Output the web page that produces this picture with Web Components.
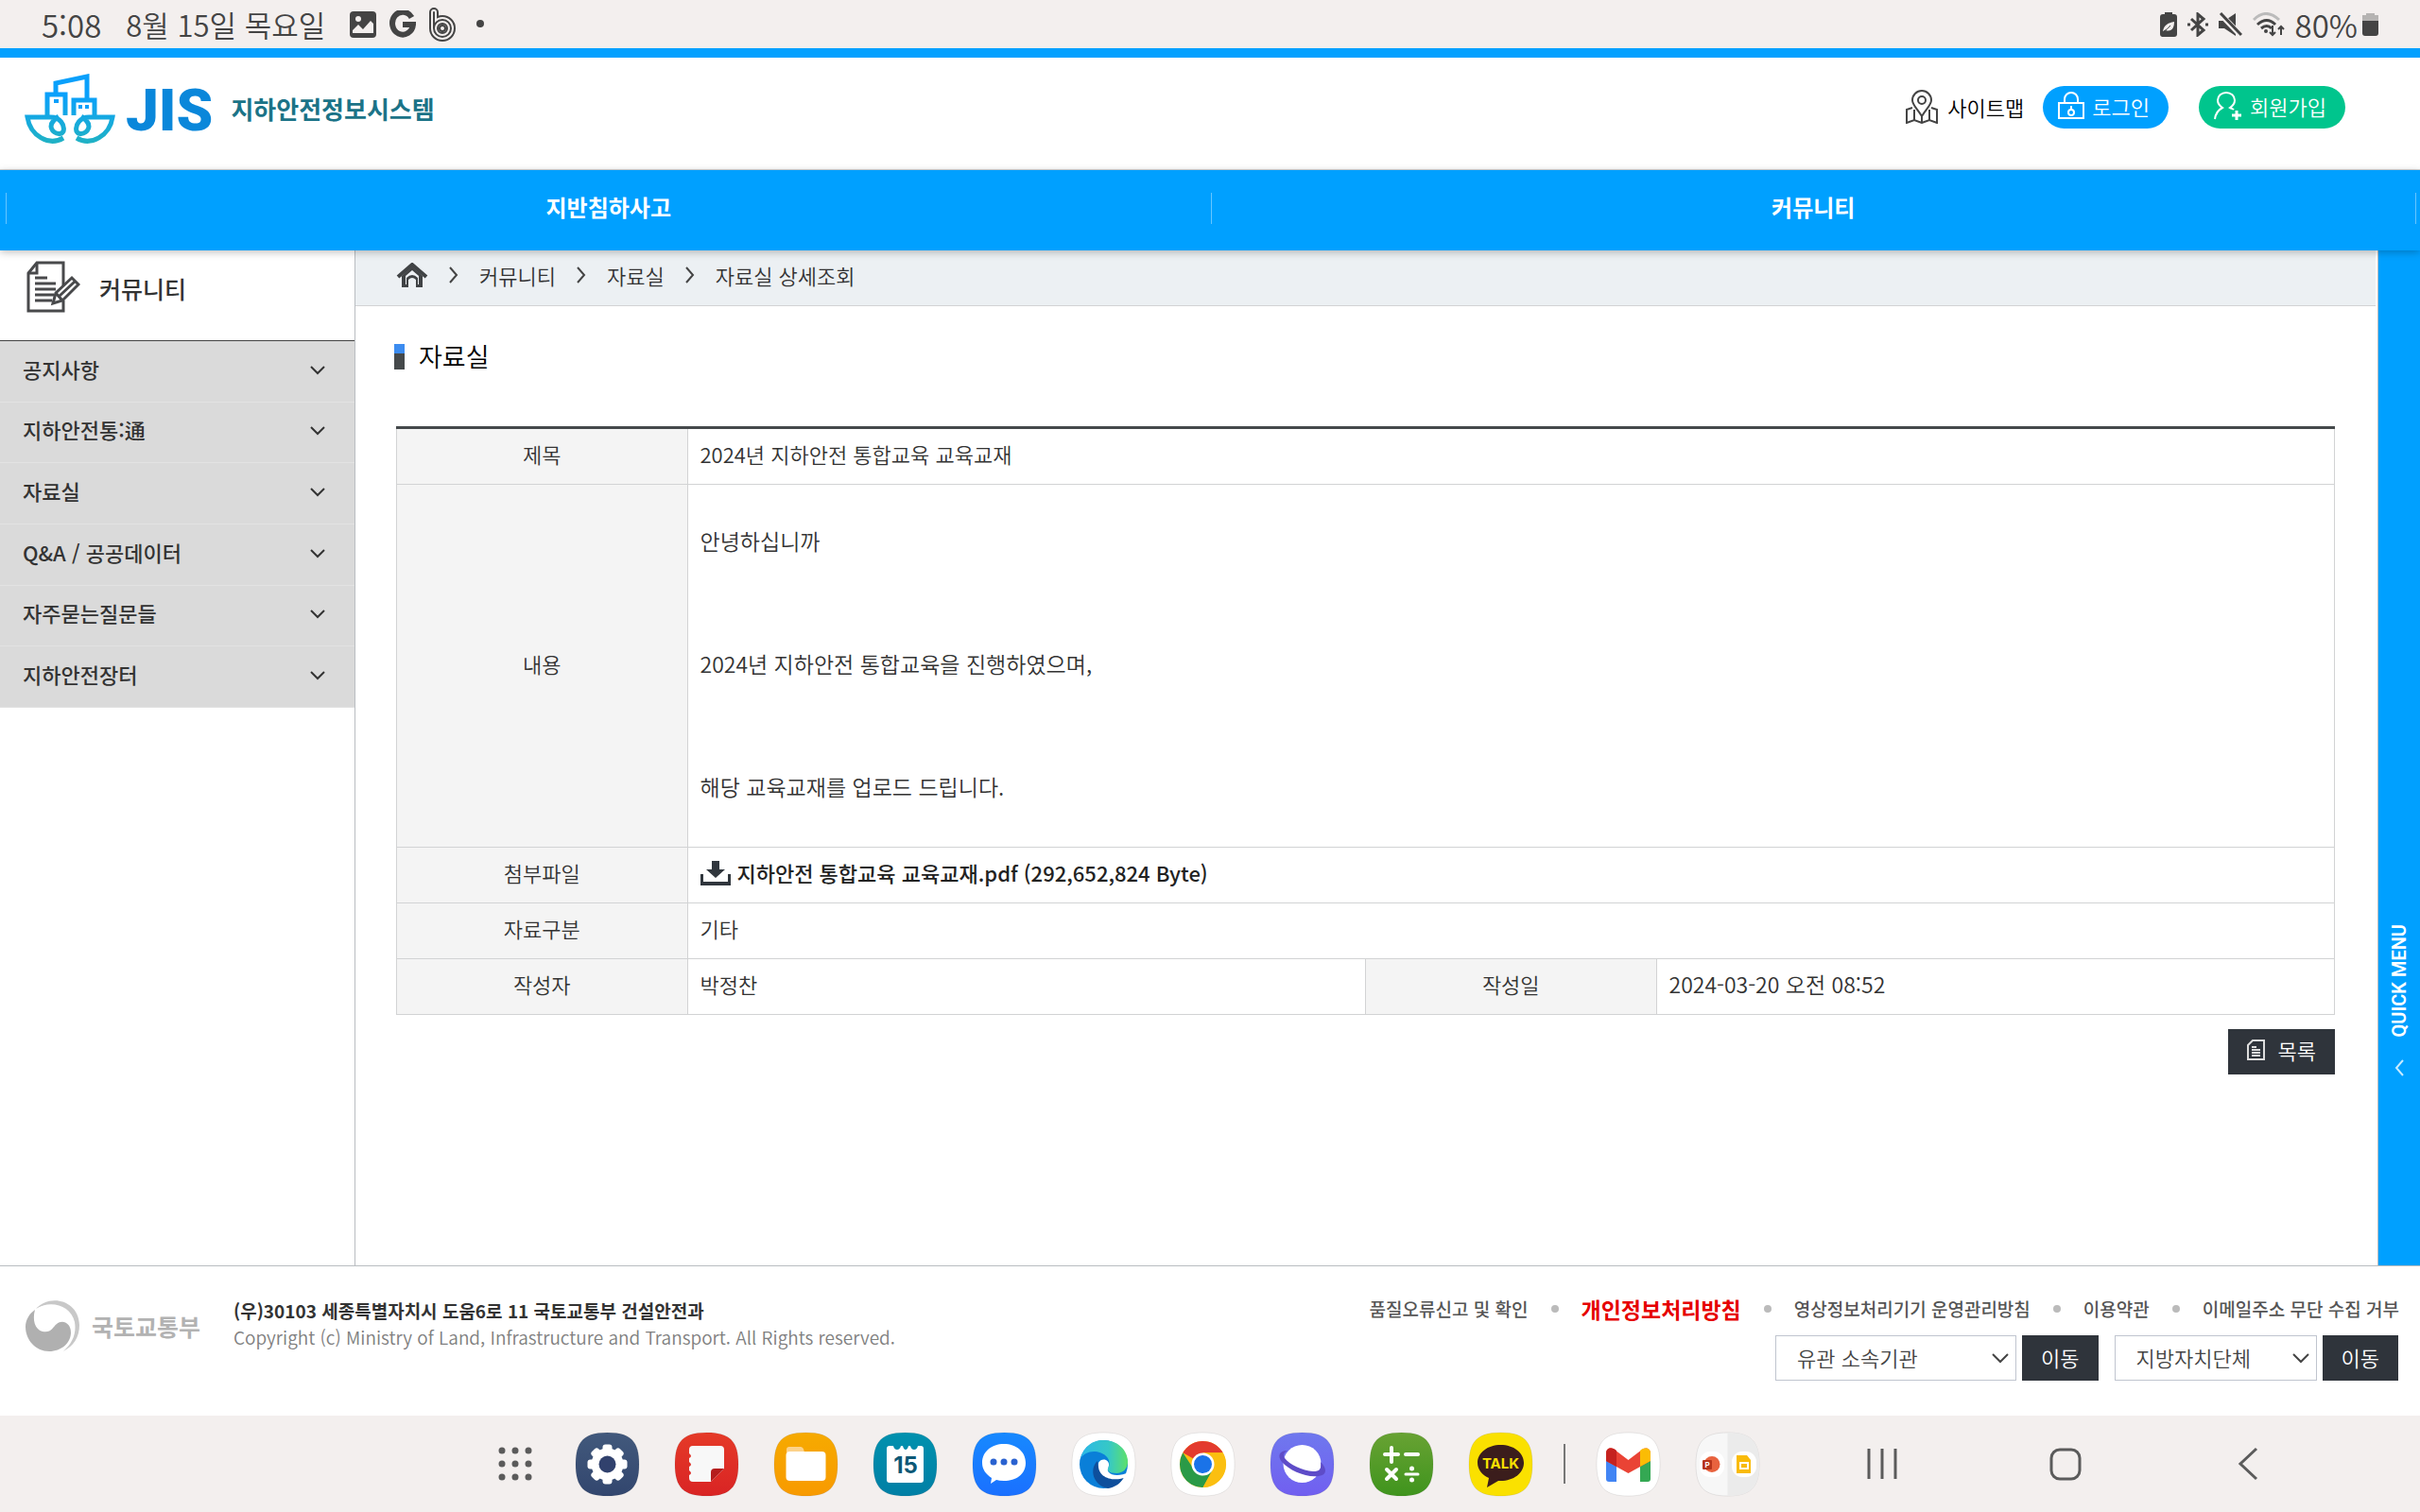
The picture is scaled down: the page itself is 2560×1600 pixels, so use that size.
<!DOCTYPE html>
<html lang="ko">
<head>
<meta charset="utf-8">
<title>지하안전정보시스템</title>
<style>
/* Variables & Colors */
:root {
  --blue: #00a0ff;
  --green: #00c58d;
  --dark: #2f343b;
  --text: #333333;
  --line: #d2d3d4;
  --frame: #b9bdc1;
  --system: #f3efee;
}

/* Document Selector */
body {
  margin: 0;
  min-height: 100vh;
  display: flex;
  flex-direction: column;
  background: #fff;
  color: var(--text);
  font-family: "Noto Sans CJK KR", "Noto Sans", sans-serif;
  font-size: 22px;
  font-weight: 350;
  line-height: 32px;
}
main {
  flex: 1;
  display: grid;
  grid-template-columns: 375px 1fr 44px;
}
.content {
  border-left: 1px solid var(--frame);
  border-right: 1px solid var(--frame);
}
</style>
</head>
<body>
<status-bar></status-bar>
<site-header>
  <pill-link slot="login" href="#login">
    <svg slot="icon" width="28" height="30" viewBox="0 0 28 30" fill="none" stroke="#fff" stroke-width="2"><path d="M1 12h26v16H1zM7 12V8a7 7 0 0 1 14 0v4"/><path d="M14 15v5"/><circle cx="14" cy="22" r="3"/></svg>
    로그인
  </pill-link>
  <pill-link slot="join" href="#join" class="join">
    <svg slot="icon" width="30" height="30" viewBox="0 0 30 30" fill="none" stroke="#fff" stroke-width="2"><path d="M1 29c1-7 4-10 8-12-3-2-5-5-5-8a9 8 0 0 1 18 0c0 3-2 6-5 8 2 1 3 1 4 2"/><path d="M24 20v10M19 25h10" stroke-width="3"/></svg>
    회원가입
  </pill-link>
</site-header>
<main-nav>
  <a href="#accident">지반침하사고</a>
  <a href="#community">커뮤니티</a>
</main-nav>
<main>
  <side-menu>
    <span slot="title">커뮤니티</span>
    <menu-item>공지사항</menu-item>
    <menu-item>지하안전통:通</menu-item>
    <menu-item>자료실</menu-item>
    <menu-item>Q&amp;A / 공공데이터</menu-item>
    <menu-item>자주묻는질문들</menu-item>
    <menu-item>지하안전장터</menu-item>
  </side-menu>
  <div class="content">
    <bread-crumb></bread-crumb>
    <post-detail><span slot="title">자료실</span></post-detail>
  </div>
  <quick-menu>QUICK MENU</quick-menu>
</main>
<site-footer></site-footer>
<task-bar></task-bar>

<script>
function define(name, html) {
  const template = document.createElement('template')
  template.innerHTML = html
  window.customElements.define(name, class extends HTMLElement {
    constructor() {
      super()
      this.attachShadow({ mode: 'open' })
      this.shadowRoot.appendChild(template.content.cloneNode(true))
    }
  })
}

define('status-bar', `<style>
:host {
  display: flex;
  align-items: center;
  justify-content: space-between;
  height: 51px;
  padding: 0 44px;
  background: var(--system);
  color: #444;
  font-size: 31px;
}
div {
  display: flex;
  align-items: center;
}
.left { gap: 14px; }
.time {
  margin-right: 12px;
  font-size: 33px;
}
.date { margin-right: 12px; }
.right { gap: 11px; }
.battery {
  display: flex;
  align-items: center;
  gap: 5px;
  font-size: 33px;
}
svg { display: block; }
</style>
<div class="left">
  <span class="time">5:08</span>
  <span class="date">8월 15일 목요일</span>
  <svg width="28" height="28" viewBox="0 0 28 28"><rect width="28" height="28" rx="4" fill="#444"/><circle cx="9" cy="8" r="3" fill="#f3efee"/><path d="M3 23v-3l6-6 5 5 8-9 3 3v10z" fill="#f3efee"/></svg>
  <svg width="28" height="30" viewBox="0 0 28 30" fill="none" stroke="#444" stroke-width="6"><path d="M23.500 7.500A11 12 0 1 0 25 15H14"/></svg>
  <svg width="28" height="36" viewBox="0 0 28 36" fill="none" stroke-linecap="round"><path d="M5 5v17a9 9 0 1 0 9-9 9 9 0 0 0-9 9" stroke="#444" stroke-width="10"/><path d="M5 5v17a9 9 0 1 0 9-9 9 9 0 0 0-9 9" stroke="#f3efee" stroke-width="6"/><path d="M5 5v17a9 9 0 1 0 9-9 9 9 0 0 0-9 9" stroke="#444" stroke-width="2"/><circle cx="14" cy="22" r="3" stroke="#444" stroke-width="2"/></svg>
  <svg width="24" height="20" viewBox="0 0 24 20"><circle cx="12" cy="9" r="4" fill="#444"/></svg>
</div>
<div class="right">
  <svg width="18" height="26" viewBox="0 0 18 26"><path d="M5 0h8v2h2q3 0 3 3v18q0 3-3 3H3q-3 0-3-3V5q0-3 3-3h2z" fill="#444"/><path d="M3 20c1-6 5-9 12-10 0 7-3 11-9 9" fill="#f3efee"/><path d="M4 20q4-2 7-6" stroke="#444" fill="none"/></svg>
  <svg width="22" height="26" viewBox="0 0 22 26" fill="none" stroke="#444" stroke-width="3"><path d="M4 7l13 12-6 5V2l6 5L4 19"/><path d="M0 13h3M19 13h3"/></svg>
  <svg width="25" height="26" viewBox="0 0 25 26"><path d="M0 9h6L18 1v24L6 17H0z" fill="#444"/><path d="M0 0l25 26" stroke="#f3efee" stroke-width="6"/><path d="M2 1l22 23" stroke="#444" stroke-width="3"/></svg>
  <svg width="34" height="26" viewBox="0 0 34 26" fill="none" stroke-width="3"><path d="M1 8q13-13 27 0" stroke="#bbb"/><path d="M5 13q10-9 19 0M9 17q6-5 11 0" stroke="#444"/><circle cx="14" cy="20" r="2" fill="#444"/><path d="M21 14v10M18 21l3 3 3-3M30 24V15M27 18l3-3 3 3" stroke="#444" stroke-width="2"/></svg>
  <span class="battery">80%
    <svg width="17" height="24" viewBox="0 0 17 24"><path d="M4 0h9v2h4v8H0V2h4z" fill="#b5b3b2"/><path d="M0 8h17v13q0 3-3 3H3q-3 0-3-3z" fill="#444"/></svg>
  </span>
</div>`)

define('pill-link', `<style>
:host {
  display: block;
  --pill: var(--blue);
}
:host(.join) { --pill: var(--green); }
a {
  display: flex;
  align-items: center;
  gap: 8px;
  padding: 5px 20px 8px 16px;
  border-radius: 23px;
  background: var(--pill);
  color: #fff;
  text-decoration: none;
}
</style>
<a href="#"><slot name="icon"></slot><span><slot></slot></span></a>`)

define('site-header', `<style>
:host {
  display: flex;
  align-items: center;
  justify-content: space-between;
  padding: 17px 79px 27px 26px;
  border-top: 10px solid var(--blue);
  border-bottom: 1px solid var(--line);
}
.logo, .tools, .sitemap {
  display: flex;
  align-items: center;
}
.logo {
  color: #1b7387;
  text-decoration: none;
}
.jis {
  margin: 4px 19px 0 11px;
  color: #0a87da;
  font: 900 62px/70px Roboto, sans-serif;
}
.name {
  font-size: 26px;
  font-weight: 700;
}
.tools { margin-bottom: 4px; }
.sitemap {
  gap: 10px;
  margin-right: 20px;
  color: #000;
  text-decoration: none;
}
.tools ::slotted(.join) { margin-left: 32px; }
</style>
<a class="logo" href="#">
  <svg width="96" height="74" viewBox="0 0 96 74" fill="none" stroke="url(#g)" stroke-width="5">
    <defs><linearGradient id="g" gradientUnits="userSpaceOnUse" x1="0" y1="0" x2="0" y2="74"><stop offset=".3" stop-color="#0aa0fb"/><stop offset="1" stop-color="#20b2c4"/></linearGradient></defs>
    <path d="M24 46V22h19v22M33 22V10l33-7v24M52 44V28h22v18"/>
    <path d="M31 27h5v4h-5zM57 33h4v4h-4zM64 33h4v4h-4z" fill="#0aa0fb" stroke="none"/>
    <path d="M41 68C26 77 6 66 3 46h25c9 0 15 8 13 15-3 5-12 2-13-5 0-5 4-8 8-11"/>
    <path d="M55 68c15 9 35-2 38-22H68c-9 0-15 8-13 15 3 5 12 2 13-5 0-5-4-8-8-11"/>
  </svg>
  <span class="jis">JIS</span>
  <span class="name">지하안전정보시스템</span>
</a>
<div class="tools">
  <a class="sitemap" href="#sitemap">
    <svg width="34" height="36" viewBox="0 0 34 36" fill="none" stroke="#444" stroke-width="2"><path d="M17 28C12 20 7 16 7 11a10 10 0 0 1 20 0c0 5-5 9-10 17z"/><circle cx="17" cy="11" r="4"/><path d="M7 19l-6 2v14l8-3 8 3 8-3 8 3V21l-6-2M9 21v11M17 28v7M25 21v11"/></svg>
    사이트맵
  </a>
  <slot name="login"></slot>
  <slot name="join"></slot>
</div>`)

define('main-nav', `<style>
:host {
  display: block;
  position: relative;
  z-index: 1;
  padding: 24px 4px 28px 6px;
  background: var(--blue);
  box-shadow: 0 2px 8px rgba(0, 0, 0, .25);
}
nav {
  display: grid;
  grid-template-columns: 1fr 1fr;
  border-right: 1px solid #66c6ff;
}
::slotted(a) {
  padding-bottom: 4px;
  border-left: 1px solid #66c6ff;
  color: #fff;
  font-size: 24px;
  font-weight: 700;
  line-height: 29px;
  text-align: center;
  text-decoration: none;
}
</style>
<nav><slot></slot></nav>`)

define('menu-item', `<style>
:host { display: grid; }
button {
  display: flex;
  align-items: center;
  justify-content: space-between;
  padding: 0 31px 2px 24px;
  border: 0;
  border-bottom: 1px solid #e2e2e2;
  background: #dadada;
  color: #333;
  font: inherit;
  font-weight: 500;
}
span { padding-bottom: 4px; }
</style>
<button type="button"><span><slot></slot></span><svg width="16" height="10" viewBox="0 0 16 10" fill="none" stroke="#333" stroke-width="2"><path d="M1 1l7 7 7-7"/></svg></button>`)

define('side-menu', `<style>
:host { display: block; }
h2 {
  display: flex;
  align-items: center;
  gap: 20px;
  margin: 0;
  padding: 11px 28px 29px;
  border-bottom: 1px solid #444;
  font-size: 25px;
  font-weight: 500;
}
h2 ::slotted(span) { padding-top: 3px; }
nav {
  display: grid;
  grid-auto-rows: 1fr;
  height: 388px;
}
</style>
<h2>
  <svg width="57" height="55" viewBox="0 0 57 55" fill="none" stroke="#48494b" stroke-width="3"><path d="M39 26V2H11L2 13v40h37V42"/><path d="M2 13h9V2M9 18h13M9 24h22M9 30h22M9 36h20M9 42h18"/><path d="M28 45l3-11 17-16 7 7-17 17z" fill="#fff"/><path d="M31 34l7 8M34 38l17-16"/></svg>
  <slot name="title"></slot>
</h2>
<nav><slot></slot></nav>`)

define('bread-crumb', `<style>
:host {
  display: block;
  margin-right: 2px;
  padding: 10px 43px 16px;
  border-bottom: 1px solid var(--line);
  background: #ecf0f3;
}
nav {
  display: flex;
  align-items: center;
  gap: 22px;
}
a {
  color: #333;
  text-decoration: none;
}
svg { display: block; }
</style>
<nav>
  <a href="#"><svg width="34" height="26" viewBox="0 0 34 26"><path d="M2 15L17 2l15 13" fill="none" stroke="#404345" stroke-width="4"/><path d="M6 14L17 4l11 10v12h-7v-8q-4-4-8 0v8H6z" fill="#404345"/><path d="M10 14l7-6 7 6v9h-1v-7q-6-6-12 0v7h-1z" fill="#ecf0f3"/></svg></a>
  <svg width="10" height="18" viewBox="0 0 10 18" fill="none" stroke="#444" stroke-width="2"><path d="M1 1l7 8-7 8"/></svg>
  <a href="#community">커뮤니티</a>
  <svg width="10" height="18" viewBox="0 0 10 18" fill="none" stroke="#444" stroke-width="2"><path d="M1 1l7 8-7 8"/></svg>
  <a href="#data">자료실</a>
  <svg width="10" height="18" viewBox="0 0 10 18" fill="none" stroke="#444" stroke-width="2"><path d="M1 1l7 8-7 8"/></svg>
  <a href="#detail">자료실 상세조회</a>
</nav>`)

define('post-detail', `<style>
:host {
  display: block;
  padding: 34px 45px 0 43px;
}
h1 {
  display: flex;
  align-items: center;
  gap: 15px;
  margin: 0 0 55px -2px;
  color: #000;
  font-size: 27px;
  font-weight: inherit;
  line-height: 38px;
}
h1::before {
  content: "";
  width: 11px;
  height: 27px;
  background: linear-gradient(#3c8cf0 10px, #45494b 10px);
}
table {
  width: 100%;
  border-collapse: collapse;
  table-layout: fixed;
}
th, td {
  padding: 10px 13px 15px;
  border: 1px solid var(--line);
  line-height: 33px;
}
tr:first-child > * { border-top: 3px solid #45494b; }
th {
  background: #f4f4f4;
  font-weight: inherit;
}
.body, .date { font-size: 23px; }
.body {
  padding: 43px 13px 47px;
}
p {
  margin: 0 0 97px;
}
p:last-child { margin: 0; }
.file {
  display: flex;
  align-items: center;
  gap: 7px;
  color: #222;
  font-weight: 500;
  text-decoration: none;
}
.actions {
  display: flex;
  justify-content: flex-end;
  margin-top: 15px;
}
button {
  display: flex;
  align-items: center;
  gap: 14px;
  padding: 6px 20px 10px;
  border: 0;
  background: var(--dark);
  color: #fff;
  font: inherit;
}
</style>
<h1><slot name="title"></slot></h1>
<table>
  <colgroup><col style="width:15%"><col style="width:35%"><col style="width:15%"><col style="width:35%"></colgroup>
  <tbody>
    <tr><th scope="row">제목</th><td colspan="3">2024년 지하안전 통합교육 교육교재</td></tr>
    <tr><th scope="row">내용</th><td colspan="3" class="body">
      <p>안녕하십니까</p>
      <p>2024년 지하안전 통합교육을 진행하였으며,</p>
      <p>해당 교육교재를 업로드 드립니다.</p>
    </td></tr>
    <tr><th scope="row">첨부파일</th><td colspan="3"><a class="file" href="#file">
      <svg width="32" height="26" viewBox="0 0 32 26" fill="#30363d"><path d="M12 0h8v9h6L16 18 6 9h6zM0 14h3v8h26v-8h3v12H0z"/></svg>
      지하안전 통합교육 교육교재.pdf (292,652,824 Byte)</a></td></tr>
    <tr><th scope="row">자료구분</th><td colspan="3">기타</td></tr>
    <tr><th scope="row">작성자</th><td>박정찬</td><th scope="row">작성일</th><td class="date">2024-03-20 오전 08:52</td></tr>
  </tbody>
</table>
<div class="actions">
  <button type="button"><svg width="19" height="22" viewBox="0 0 19 22" fill="none" stroke="#ddd" stroke-width="2"><path d="M6 1h12v20H1V6zM5 8h5M5 11h9M5 14h9M5 17h9"/></svg>목록</button>
</div>`)

define('quick-menu', `<style>
:host {
  display: flex;
  align-items: flex-end;
  background: var(--blue);
}
button {
  display: flex;
  flex-direction: column;
  align-items: center;
  gap: 24px;
  width: 100%;
  padding: 0 0 200px;
  border: 0;
  background: none;
  color: #fff;
  font: 600 20px/24px Roboto, sans-serif;
}
span {
  writing-mode: vertical-rl;
  transform: rotate(180deg);
}
</style>
<button type="button"><span><slot></slot></span><svg width="10" height="18" viewBox="0 0 10 18" fill="none" stroke="#c8ebff" stroke-width="2"><path d="M9 1L2 9l7 8"/></svg></button>`)

define('link-select', `<style>
:host {
  display: flex;
  gap: 6px;
}
label {
  display: grid;
  align-items: center;
  width: var(--select-width);
}
select, svg { grid-area: 1 / 1; }
select {
  appearance: none;
  width: 100%;
  height: 48px;
  padding: 0 24px 2px 22px;
  border: 1px solid #c0c5cf;
  border-radius: 0;
  background: #fff;
  color: #444;
  font: inherit;
}
svg {
  justify-self: end;
  margin-right: 8px;
  pointer-events: none;
}
button {
  padding: 0 20px 2px;
  border: 0;
  background: var(--dark);
  color: #fff;
  font: inherit;
}
</style>
<label>
  <select><option></option></select>
  <svg width="18" height="11" viewBox="0 0 18 11" fill="none" stroke="#444" stroke-width="2"><path d="M1 1l8 8 8-8"/></svg>
</label>
<button type="button">이동</button>`)

define('site-footer', `<style>
:host {
  display: flex;
  justify-content: space-between;
  min-height: 96px;
  padding: 31px 22px;
  border-top: 1px solid var(--frame);
}
.about, .owner, .links, .selects, li {
  display: flex;
  align-items: center;
}
.about {
  align-items: flex-start;
  gap: 35px;
}
.owner {
  gap: 12px;
  padding: 4px 0 0 5px;
  color: #b2b2b2;
  font-size: 25px;
  font-weight: 700;
}
.contact { padding-top: 2px; }
address {
  font-size: 19px;
  font-style: normal;
  font-weight: 700;
  line-height: 28px;
}
p {
  margin: 0;
  color: #808080;
  font-size: 19px;
  line-height: 28px;
}
.links {
  justify-content: flex-end;
  margin: -2px 0 12px;
  padding: 0;
  list-style: none;
  font-size: 19px;
}
li + li::before {
  content: "";
  width: 8px;
  height: 8px;
  margin: 0 24px;
  border-radius: 50%;
  background: #bbb;
}
a {
  color: #555;
  font-weight: 500;
  text-decoration: none;
}
.privacy {
  color: #e60000;
  font-size: 23px;
  font-weight: 700;
}
.selects {
  justify-content: flex-end;
  gap: 17px;
  padding-right: 1px;
}
.org { --select-width: 255px; }
.local { --select-width: 214px; }
</style>
<div class="about">
  <div class="owner">
    <svg width="58" height="56" viewBox="0 0 58 56"><path d="M11 10C25-6 56 0 57 27c0 13-6 22-17 28 10-9 14-19 12-31C48 6 26 0 11 10z" fill="#c8c8c8"/><path d="M10 12C20 2 41 4 47 23c-4-3-12-2-15 4-3 7-8 11-14 8C10 31 8 22 10 12z" fill="#fff"/><path d="M10 11C7 22 10 32 18 34c9 2 11-5 15-8 6-5 15-1 15 9 0 11-10 20-23 20C11 55 0 43 0 29 0 22 4 15 10 11z" fill="#b0b0b0"/></svg>
    국토교통부
  </div>
  <div class="contact">
    <address>(우)30103 세종특별자치시 도움6로 11 국토교통부 건설안전과</address>
    <p>Copyright (c) Ministry of Land, Infrastructure and Transport. All Rights reserved.</p>
  </div>
</div>
<div>
  <ul class="links">
    <li><a href="#report">품질오류신고 및 확인</a></li>
    <li><a class="privacy" href="#privacy">개인정보처리방침</a></li>
    <li><a href="#cctv">영상정보처리기기 운영관리방침</a></li>
    <li><a href="#terms">이용약관</a></li>
    <li><a href="#email">이메일주소 무단 수집 거부</a></li>
  </ul>
  <div class="selects">
    <link-select class="org" label="유관 소속기관"></link-select>
    <link-select class="local" label="지방자치단체"></link-select>
  </div>
</div>`)

const footer = document.querySelector('site-footer').shadowRoot
footer.querySelectorAll('link-select').forEach((el) => {
  const text = el.getAttribute('label')
  const select = el.shadowRoot.querySelector('select')
  select.options[0].textContent = text
  select.setAttribute('aria-label', text)
})

document.querySelectorAll('pill-link').forEach((el) => {
  el.shadowRoot.querySelector('a').href = el.getAttribute('href')
})

define('app-icon', `<style>
:host {
  display: block;
  width: 67px;
  height: 67px;
}
button {
  display: block;
  padding: 0;
  border: 0;
  background: none;
}
svg {
  display: block;
  overflow: visible;
}
text { font: 700 24px Inter, sans-serif; }
</style>
<button type="button"></button>`)

// every launcher icon sits on the same rounded tile
const tile = 'M33.500 0C58 0 67 9 67 33.500S58 67 33.500 67 0 58 0 33.500 9 0 33.500 0z'
const apps = {
  settings: ['#42597c', '#32466e', `<g transform="translate(33.500 33.500)" fill="#fff"><circle r="17"/>${[0, 45, 90, 135].map((a) => `<rect x="-5" y="-21" width="10" height="42" rx="3" transform="rotate(${a})"/>`).join('')}<circle r="9" fill="#31416d"/></g>`],
  notes: ['#e53a28', '#d92424', '<path d="M19 14h29q4 0 4 4v20L38 52H19q-4 0-4-4v-3q4-2 0-5v-4q4-2 0-5v-4q4-2 0-5v-4q0-4 4-4z" fill="#f8f8f8"/><path d="M38 52V42q0-4 4-4h10z" fill="#b51d1d"/>'],
  files: ['#f6aa00', '#f89a00', '<path d="M13 18q0-3 3-3h12q3 0 4 6H13z" fill="#fcd28a"/><rect x="12.500" y="20" width="42" height="31" rx="4" fill="#fff"/>'],
  calendar: ['#0091ae', '#007fa5', '<path d="M17 14h4q1 4 4 4t4-4h2q1 4 3 4t3-4h2q1 4 4 4t4-4h3q3 0 3 3v33q0 3-3 3H17q-3 0-3-3V17q0-3 3-3z" fill="#fff"/><text x="34" y="43" text-anchor="middle" fill="#0c5876">15</text>'],
  messages: ['#1789ff', '#1a70ff', '<path d="M33 12c13 0 23 8 23 20S46 51 33 51q-5 0-8-1l-6 4 1-6C14 44 10 39 10 32c0-12 10-20 23-20z" fill="#fff"/><g fill="#2a62d0"><circle cx="22" cy="31" r="3.500"/><circle cx="33" cy="31" r="3.500"/><circle cx="44" cy="31" r="3.500"/></g>'],
  edge: ['#fff', '#fff', '<defs><linearGradient id="e"><stop stop-color="#2bb8e8"/><stop offset=".6" stop-color="#36c8c6"/><stop offset="1" stop-color="#5ee06a"/></linearGradient></defs><circle cx="33.500" cy="33.500" r="25.500" fill="#0a7fd8"/><path d="M9 27C13 14 22 8 33 8c15 0 26 10 26 23 0 7-5 12-12 12-8 0-11-3-8-7 3-9-6-16-16-16-6 0-11 3-14 7z" fill="url(#e)"/><path d="M27 30c-9 8-5 26 11 29 8-1 14-6 17-12-10 5-26 1-28-17z" fill="#0e4f9c"/><path d="M28 32c3-6 12-4 11 3-1 3-2 5 0 7 3 4 13 4 21 0l-3 5c-10 5-31 3-29-15z" fill="#fff"/>'],
  chrome: ['#fff', '#fff', '<circle cx="33.500" cy="33.500" r="24.500" fill="#fbbf10"/><path d="M12.300 21.200a24.500 24.500 0 0 1 42.400 0H33.500v12z" fill="#e33b2e"/><path d="M12.300 21.200a24.500 24.500 0 0 0 21.200 36.800L44 39l-20 0z" fill="#2a9a47"/><path d="M33.500 21.200h21.200A24.500 24.500 0 0 1 33.500 58L44 39z" fill="#fbbf10"/><circle cx="33.500" cy="33.500" r="12" fill="#fff"/><circle cx="33.500" cy="33.500" r="9.500" fill="#1a73e8"/>'],
  internet: ['#6f78ee', '#715ff0', '<circle cx="33.500" cy="33" r="20" fill="#fff"/><path d="M18 19C9 19 7 25 12 31c8 9 26 17 39 15 9-1 9-8 2-15 1 8-1 10-8 10-11-1-25-7-30-14-2-3-1-6 3-8z" fill="#5e4cc8"/>'],
  calc: ['#68a233', '#3f941d', '<g stroke="#fff" stroke-width="4" stroke-linecap="round"><path d="M23 16v15M16 23h14M38 23h13M18 39l10 10M28 39L18 49"/><path d="M38 44h13" stroke-width="3"/></g><circle cx="44.500" cy="38" r="2.500" fill="#fff"/><circle cx="44.500" cy="50" r="2.500" fill="#fff"/>'],
  talk: ['#fae100', '#fae100', '<path d="M33.500 13C47 13 58 21 58 32S47 51 33.500 51H31l-12 7 2-10C14 45 9 39 9 32c0-11 11-19 24.500-19z" fill="#3b1d1c"/><text x="33.500" y="38" text-anchor="middle" fill="#fae100" style="font-size:15px">TALK</text>'],
  gmail: ['#fff', '#fff', '<path d="M10 27l11 8v17h-8q-3 0-3-3z" fill="#4285f4"/><path d="M57 27l-11 8v17h8q3 0 3-3z" fill="#34a853"/><path d="M10 30v-8c0-6 6-7 9-4l14.500 11L48 18c4-3 9-1 9 4v8L33.500 43z" fill="#ea4335"/><path d="M10 30v-8c0-6 6-7 11-3v17z" fill="#c5221f"/><path d="M57 30v-8c0-6-6-7-11-3v17z" fill="#fbbc04"/>'],
  folder: ['#f7f7f7', '#f7f7f7', '<path d="M33.500 0C58 0 67 9 67 33.500S58 67 33.500 67z" fill="#ebebeb"/><rect x="4" y="20" width="26" height="27" rx="11" fill="#fff"/><rect x="38" y="20" width="26" height="27" rx="11" fill="#fff"/><circle cx="17" cy="33.500" r="8.500" fill="#e8623e"/><rect x="7" y="29" width="10" height="10" rx="1" fill="#b7341b"/><text x="12" y="37" text-anchor="middle" fill="#fff" style="font-size:8px">P</text><path d="M43 24h11l4 5v14H43z" fill="#f9bb08"/><path d="M47 32h8v6h-8z" fill="none" stroke="#fff" stroke-width="2"/>']
}

define('task-bar', `<style>
:host {
  display: flex;
  align-items: center;
  justify-content: space-between;
  height: 102px;
  padding: 0 163px 0 527px;
  background: var(--system);
}
.apps, .keys {
  display: flex;
  align-items: center;
  gap: 38px;
}
.keys { gap: 158px; }
.divider {
  width: 2px;
  height: 42px;
  margin: 0 -5px;
  background: #777;
}
button {
  display: block;
  padding: 0;
  border: 0;
  background: none;
}
.grid { margin-right: 8px; }
svg { display: block; }
</style>
<div class="apps">
  <button class="grid" type="button" aria-label="앱"><svg width="36" height="36" viewBox="0 0 36 36" fill="#5b5b5b">${[4, 18, 32].map((y) => [4, 18, 32].map((x) => `<circle cx="${x}" cy="${y}" r="3.500"/>`).join('')).join('')}</svg></button>
  <app-icon name="settings"></app-icon>
  <app-icon name="notes"></app-icon>
  <app-icon name="files"></app-icon>
  <app-icon name="calendar"></app-icon>
  <app-icon name="messages"></app-icon>
  <app-icon name="edge"></app-icon>
  <app-icon name="chrome"></app-icon>
  <app-icon name="internet"></app-icon>
  <app-icon name="calc"></app-icon>
  <app-icon name="talk"></app-icon>
  <span class="divider"></span>
  <app-icon name="gmail"></app-icon>
  <app-icon name="folder"></app-icon>
</div>
<div class="keys">
  <button type="button" aria-label="최근 앱"><svg width="36" height="36" viewBox="0 0 36 36" stroke="#5b5b5b" stroke-width="3"><path d="M4 2v32M18 2v32M32 2v32"/></svg></button>
  <button type="button" aria-label="홈"><svg width="36" height="36" viewBox="0 0 36 36" fill="none" stroke="#5b5b5b" stroke-width="3"><rect x="3" y="3" width="30" height="31" rx="9"/></svg></button>
  <button type="button" aria-label="뒤로"><svg width="36" height="36" viewBox="0 0 36 36" fill="none" stroke="#5b5b5b" stroke-width="3"><path d="M26 2L9 18l17 16"/></svg></button>
</div>`)

document.querySelector('task-bar').shadowRoot.querySelectorAll('app-icon').forEach((el) => {
  const name = el.getAttribute('name')
  const [from, to, art] = apps[name]
  const button = el.shadowRoot.querySelector('button')
  button.setAttribute('aria-label', name)
  button.innerHTML = `<svg width="67" height="67" viewBox="0 0 67 67"><defs><linearGradient id="t" x2="0" y2="1"><stop stop-color="${from}"/><stop offset="1" stop-color="${to}"/></linearGradient></defs><path d="${tile}" fill="url(#t)" stroke="#000" stroke-opacity=".08"/>${art}</svg>`
})
</script>
</body>
</html>
